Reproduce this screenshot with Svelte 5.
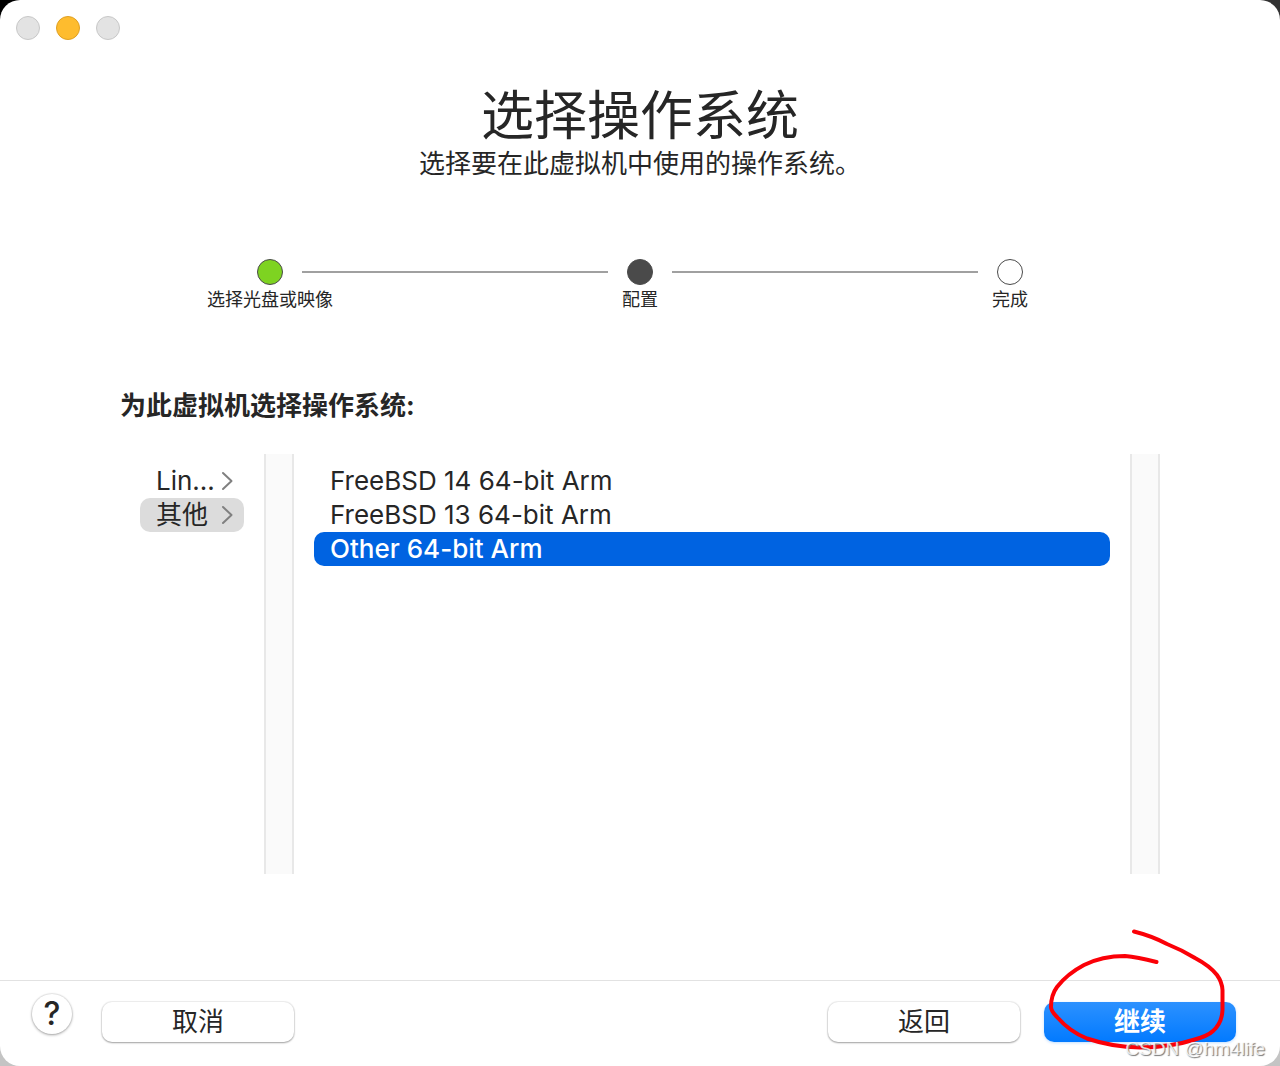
<script>
  const steps = [
    { label: '选择光盘或映像', state: 'done' },
    { label: '配置', state: 'current' },
    { label: '完成', state: 'pending' }
  ];

  const families = [
    { id: 'linux', label: 'Lin...' },
    { id: 'other', label: '其他' }
  ];

  const systems = ['FreeBSD 14 64-bit Arm', 'FreeBSD 13 64-bit Arm', 'Other 64-bit Arm'];

  let family = $state('other');
  let system = $state('Other 64-bit Arm');
</script>

<div class="window">
  <div class="titlebar">
    <button class="light" aria-label="关闭"></button>
    <button class="light minimise" aria-label="最小化"></button>
    <button class="light" aria-label="缩放"></button>
  </div>

  <main>
    <header>
      <h1>选择操作系统</h1>
      <p>选择要在此虚拟机中使用的操作系统。</p>
    </header>

    <ol class="steps">
      {#each steps as step, i}
        {#if i > 0}
          <li class="line" aria-hidden="true"></li>
        {/if}
        <li class="step">
          <span class="dot {step.state}"></span>
          <span class="label">{step.label}</span>
        </li>
      {/each}
    </ol>

    <h2>为此虚拟机选择操作系统:</h2>

    <div class="browser">
      <div class="column families">
        {#each families as item}
          <button class="row" class:active={family === item.id} onclick={() => (family = item.id)}>
            <span>{item.label}</span>
            <svg class="chevron" viewBox="0 0 12 20" aria-hidden="true">
              <path d="M2 2 L10.500 10 L2 18" />
            </svg>
          </button>
        {/each}
      </div>
      <div class="track"></div>
      <div class="column systems">
        {#each systems as item}
          <button class="row" class:selected={system === item} onclick={() => (system = item)}>
            {item}
          </button>
        {/each}
      </div>
      <div class="track"></div>
    </div>
  </main>

  <footer>
    <button class="help" aria-label="帮助">?</button>
    <button class="push cancel">取消</button>
    <button class="push">返回</button>
    <button class="push primary">继续</button>
  </footer>

  <div class="overlay">
    <svg class="scribble" viewBox="0 0 260 146" aria-hidden="true">
      <path
        d="M114 11.500 Q132 16 147 24 Q162 30 175 38 Q190 46 197 55 Q202 62 202.500 70 L202.500 90 Q202 103 193 111 Q188 116 173 120 Q152 127 120 127.500 Q92 127 67 118.500 Q50 112 37 97 Q31 91 31 87 Q31 75 37 67 Q47 54 64 45 Q82 36 105 36 Q117 37 136.500 42"
      />
    </svg>
    <span class="watermark">CSDN @hm4life</span>
  </div>
</div>

<style>
  :global(body) {
    margin: 0;
    background:
      linear-gradient(transparent 50%, #c4c4c4 50%),
      linear-gradient(90deg, #000 50%, #333 50%);
  }

  .window {
    position: relative;
    display: flex;
    flex-direction: column;
    box-sizing: border-box;
    min-height: 100vh;
    background: #fff;
    border-radius: 20px;
    color: #262626;
    font-family: Inter, 'Noto Sans CJK SC', sans-serif;
    font-size: 26px;
    line-height: 34px;
  }

  button {
    border: 0;
    margin: 0;
    padding: 0;
    background: none;
    color: inherit;
    font: inherit;
  }

  .titlebar {
    display: flex;
    gap: 16px;
    padding: 16px;
  }

  .light {
    box-sizing: border-box;
    width: 24px;
    height: 24px;
    border: 1px solid #c8c8c8;
    border-radius: 50%;
    background: #e3e3e3;
  }

  .light.minimise {
    border-color: #dfa023;
    background: #febc2e;
  }

  main {
    flex: 1;
    display: flex;
    flex-direction: column;
    padding: 29px 120px 106px;
  }

  header {
    text-align: center;
  }

  h1 {
    margin: 0;
    font-size: 53px;
    font-weight: 400;
    line-height: 62px;
  }

  header p {
    margin: 0;
  }

  .steps {
    display: flex;
    list-style: none;
    margin: 78px 118px 0;
    padding: 0;
  }

  .line {
    flex: 1;
    height: 2px;
    margin-top: 12px;
    background: #a0a0a0;
  }

  .step {
    display: flex;
    flex-direction: column;
    align-items: center;
    width: 64px;
  }

  .dot {
    box-sizing: border-box;
    width: 26px;
    height: 26px;
    border: 1px solid #4a4a4a;
    border-radius: 50%;
    background: #fff;
  }

  .dot.done {
    background: #7ed321;
  }

  .dot.current {
    background: #4a4a4a;
  }

  .label {
    margin-top: 2px;
    font-size: 18px;
    line-height: 26px;
    white-space: nowrap;
  }

  h2 {
    margin: 76px 0 31px;
    font-size: 26px;
    font-weight: 700;
    line-height: 34px;
  }

  .browser {
    flex: 1;
    display: flex;
    min-height: 300px;
  }

  .column {
    box-sizing: border-box;
    display: flex;
    flex-direction: column;
    padding: 10px 20px;
  }

  .families {
    width: 144px;
  }

  .systems {
    flex: 1;
  }

  .row {
    display: flex;
    align-items: center;
    justify-content: space-between;
    height: 34px;
    padding: 0 16px;
    border-radius: 10px;
    text-align: left;
    white-space: nowrap;
  }

  .families .row {
    padding-right: 11px;
  }

  .row.active {
    background: #dcdcdc;
  }

  .row.selected {
    background: #0063e1;
    color: #fff;
    font-weight: 500;
  }

  .chevron {
    width: 12px;
    height: 20px;
    fill: none;
    stroke: #808080;
    stroke-width: 2;
    stroke-linecap: round;
    stroke-linejoin: round;
  }

  .track {
    box-sizing: border-box;
    width: 30px;
    border: solid #e8e8e8;
    border-width: 0 2px;
    background: #fafafa;
  }

  footer {
    display: flex;
    align-items: flex-start;
    gap: 24px;
    padding: 21px 44px 24px 32px;
    border-top: 1px solid #e2e2e2;
  }

  .help {
    width: 40px;
    height: 40px;
    margin: -8px 6px 0 0;
    border-radius: 50%;
    background: #fff;
    box-shadow: 0 0 1px 1px #0001, 0 1px 3px #0005;
    font-size: 32px;
    font-weight: 500;
    line-height: 40px;
    text-align: center;
  }

  .push {
    width: 192px;
    height: 40px;
    border-radius: 10px;
    background: #fff;
    box-shadow: 0 0 1px 1px #0001, 0 1px 2px #0005;
    line-height: 38px;
  }

  .cancel {
    margin-right: auto;
  }

  .primary {
    background: linear-gradient(#2c91ff, #027aff);
    box-shadow: 0 1px 3px #007aff40;
    color: #fff;
    font-weight: 600;
  }

  .overlay {
    position: absolute;
    right: 0;
    bottom: 0;
    width: 260px;
    height: 146px;
    pointer-events: none;
  }

  .scribble {
    display: block;
    width: 100%;
    height: 100%;
    fill: none;
    stroke: #fb0007;
    stroke-width: 4;
    stroke-linecap: round;
    stroke-linejoin: round;
  }

  .watermark {
    position: absolute;
    right: 15px;
    bottom: 5px;
    color: #fffc;
    font-family: 'Liberation Sans', sans-serif;
    font-size: 19px;
    line-height: 24px;
    text-shadow: 1px 1px 1px #777;
    white-space: nowrap;
  }
</style>
